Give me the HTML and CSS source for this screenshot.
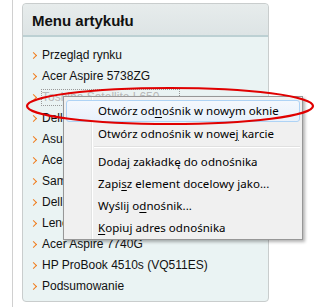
FILE: index.html
```html
<!DOCTYPE html>
<html lang="pl">
<head>
  <meta charset="UTF-8">
  <title>Menu artykułu</title>
  <link rel="stylesheet" href="styles.css">
</head>
<body>
  <div class="page">
    <div class="box">
      <h3 class="box-title">Menu artykułu</h3>
      <ul class="toc">
        <li><a href="#">Przegląd rynku</a></li>
        <li><a href="#">Acer Aspire 5738ZG</a></li>
        <li class="focused"><a href="#">Toshiba Satellite L650</a></li>
        <li><a href="#">Dell Inspiron 1564</a></li>
        <li><a href="#">Asus N61JV</a></li>
        <li><a href="#">Acer Aspire 5742G</a></li>
        <li><a href="#">Samsung R580</a></li>
        <li><a href="#">Dell Studio 1558</a></li>
        <li><a href="#">Lenovo IdeaPad Y560</a></li>
        <li><a href="#">Acer Aspire 7740G</a></li>
        <li><a href="#">HP ProBook 4510s (VQ511ES)</a></li>
        <li><a href="#">Podsumowanie</a></li>
      </ul>
    </div>

    <!-- menu kontekstowe -->
    <div class="ctx-menu">
      <div class="ctx-item active">Otwórz od<u>n</u>ośnik w nowym oknie</div>
      <div class="ctx-item">Otwórz odnośnik w nowe<u>j</u> karcie</div>
      <div class="ctx-sep"></div>
      <div class="ctx-item">Doda<u>j</u> zakładkę do odnośnika</div>
      <div class="ctx-item">Zapi<u>s</u>z element docelowy jako...</div>
      <div class="ctx-item">Wyślij o<u>d</u>nośnik...</div>
      <div class="ctx-item"><u>K</u>opiuj adres odnośnika</div>
    </div>

    <svg class="mark" width="321" height="60" viewBox="0 0 321 60">
      <ellipse cx="170" cy="20" rx="143" ry="18" fill="none" stroke="#e00000" stroke-width="2.2"/>
    </svg>
  </div>
</body>
</html>
```

FILE: styles.css
```css
html, body {
  margin: 0; padding: 0;
  background: #fff;
}
.page {
  position: relative;
  margin-left: 12px;
  border-left: 1px solid #d0d0d0;
  height: 307px;
  padding: 3px 0 0 9px;
  box-sizing: border-box;
}
.box {
  width: 247px;
  box-sizing: border-box;
  border: 1px solid #c9cdcd;
  border-radius: 4px;
  background: #eaf3f3;
  padding-bottom: 4px;
  font-family: 'Liberation Sans', Arial, sans-serif;
}
.box-title {
  margin: 0;
  height: 31px;
  line-height: 33px;
  padding-left: 9px;
  font-size: 15px;
  font-weight: 700;
  color: #111;
  background: linear-gradient(#e7ecec, #dde4e5);
  border-bottom: 2px solid #bcd0d3;
  border-radius: 4px 4px 0 0;
}
.toc {
  list-style: none;
  margin: 0;
  padding: 8px 0 0 8px;
}
.toc li {
  height: 21px;
  line-height: 21px;
  font-size: 12px;
  display: flex;
  align-items: center;
}
.toc li::before {
  content: "";
  width: 4px; height: 4px;
  border-right: 1.5px solid #f07c1c;
  border-top: 1.5px solid #f07c1c;
  transform: rotate(45deg);
  margin: 0 6px 0 0;
}
.toc a {
  color: #111;
  text-decoration: none;
  white-space: nowrap;
}
.toc .focused a {
  color: #b8b8b8;
  outline: 1px dotted #999;
  line-height: 15px;
  padding-right: 20px;
}

.ctx-menu {
  position: absolute;
  left: 50px; top: 96px;
  width: 240px;
  box-sizing: border-box;
  border: 1px solid #979797;
  background: #f0f0f0 linear-gradient(90deg, transparent 27px, #e2e3e3 27px, #e2e3e3 28px, #fff 28px, #fff 29px, transparent 29px);
  padding: 3px 2px 1px 2px;
  box-shadow: 2px 2px 3px rgba(0,0,0,0.3);
  font-family: 'Noto Sans', 'Open Sans', sans-serif;
  font-size: 11.5px;
  letter-spacing: 0.05px;
  color: #000;
}
.ctx-item {
  height: 22px;
  line-height: 22px;
  padding-left: 31px;
  box-sizing: border-box;
  border: 1px solid transparent;
  border-radius: 3px;
  white-space: nowrap;
}
.ctx-item.active {
  border-color: #aed3f5;
  background: linear-gradient(#f4f8fd, #e8f1fb);
  line-height: 20px;
}
.ctx-item u { text-underline-offset: 2px; }
.ctx-sep {
  height: 6px;
  margin-left: 28px;
  background: linear-gradient(transparent 2px, #e0e0e0 2px, #e0e0e0 3px, #fff 3px, #fff 4px, transparent 4px);
}

.mark {
  position: absolute;
  left: -13px; top: 86px;
  overflow: visible;
}
```
